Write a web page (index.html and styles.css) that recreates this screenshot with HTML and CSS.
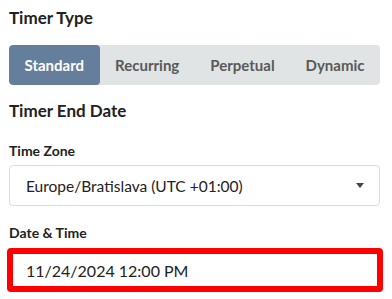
FILE: index.html
```html
<!DOCTYPE html>
<html lang="en">
<head>
    <meta charset="UTF-8">
    <meta name="viewport" content="width=device-width, initial-scale=1.0">
    <title>Timer settings</title>
    <link rel="stylesheet" href="styles.css">
</head>
<body>
    <div class="panel">
        <h2 class="section-title">Timer Type</h2>
        <div class="segments">
            <button class="segment active">Standard</button>
            <button class="segment">Recurring</button>
            <button class="segment">Perpetual</button>
            <button class="segment">Dynamic</button>
        </div>

        <h2 class="section-title end-date">Timer End Date</h2>

        <label class="field-label">Time Zone</label>
        <div class="select">
            <span>Europe/Bratislava (UTC +01:00)</span>
            <span class="caret"></span>
        </div>

        <label class="field-label">Date &amp; Time</label>
        <div class="date-input">11/24/2024 12:00 PM</div>
    </div>
</body>
</html>
```

FILE: styles.css
```css
body {
    margin: 0;
    background: #fff;
    font-family: 'Lato', sans-serif;
    color: #222;
}

.panel {
    padding: 8px 12px 0 9px;
}

.section-title {
    margin: 0;
    font-size: 17px;
    line-height: 20px;
    font-weight: 700;
    color: #222;
}

.segments {
    display: flex;
    margin-top: 17px;
    height: 40px;
    background: #e1e4e5;
    border-radius: 4px;
    overflow: hidden;
}

.segment {
    flex: 1 1 auto;
    padding: 0 14px;
    border: none;
    background: transparent;
    font-family: 'Lato', sans-serif;
    font-size: 15px;
    font-weight: 700;
    color: #595959;
}

.segment.active {
    background: #647e9c;
    color: #fff;
    border-radius: 4px;
}

.end-date {
    margin-top: 16px;
}

.field-label {
    display: block;
    margin-top: 21px;
    font-size: 14px;
    line-height: 17px;
    font-weight: 700;
    color: #222;
}

.select {
    display: flex;
    align-items: center;
    justify-content: space-between;
    margin-top: 6px;
    height: 39px;
    padding: 0 15px 0 16px;
    border: 1px solid #dcdcdc;
    border-radius: 4px;
    font-size: 15.5px;
}

.caret {
    width: 0;
    height: 0;
    border-left: 4.5px solid transparent;
    border-right: 4.5px solid transparent;
    border-top: 5px solid #444;
}

.select + .field-label {
    margin-top: 18px;
}

.date-input {
    display: flex;
    align-items: center;
    margin: 7px -3px 0 -2px;
    height: 32px;
    padding: 0 13px;
    border: 6px solid #ff0000;
    border-radius: 4px;
    font-size: 16px;
}
```
